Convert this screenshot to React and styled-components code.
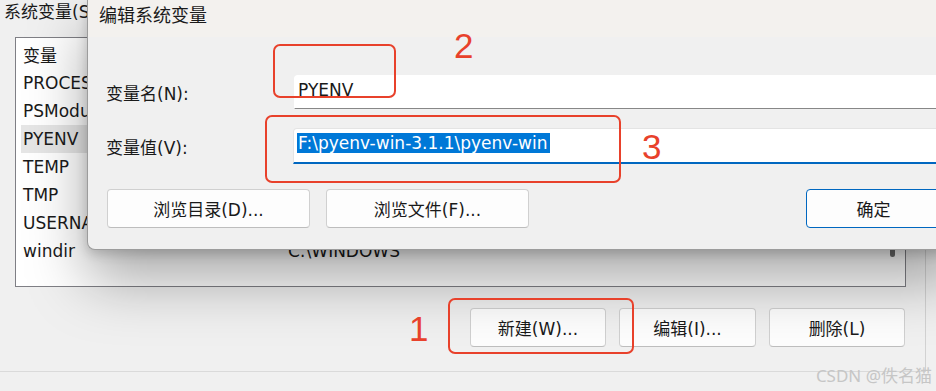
import styled, { createGlobalStyle } from 'styled-components'

const uiFont = `"DejaVu Sans", "Noto Sans CJK SC", sans-serif`

const GlobalStyle = createGlobalStyle`
  html, body {
    margin: 0;
    padding: 0;
    overflow: hidden;
    background: #f0f0f0;
  }
  body {
    font-family: ${uiFont};
    color: #1a1a1a;
  }
`

const Stage = styled.div`
  position: relative;
  width: 936px;
  height: 391px;
  overflow: hidden;
  background: #f0f0f0;
`

const BackWindow = styled.div`
  width: 926px;
  height: 372px;
  box-sizing: border-box;
  border-right: 1px solid #d2d2d2;
  border-bottom: 1px solid #dadada;
  display: flex;
  flex-direction: column;
`

const GroupTitle = styled.div`
  height: 37px;
  padding-left: 4px;
  font-size: 17px;
  line-height: 25px;
`

const ListBox = styled.div`
  margin-left: 15px;
  width: 891px;
  height: 250px;
  box-sizing: border-box;
  border: 1px solid #7f7f85;
  background: #fff;
  display: flex;
`

const Rows = styled.div`
  flex: 1;
  padding: 2px 0 0 5px;
`

const Row = styled.div`
  display: grid;
  grid-template-columns: 265px 1fr;
  align-items: center;
  height: ${p => (p.$header ? 29 : 28)}px;
  padding-left: 2px;
  font-size: 17px;
  white-space: nowrap;
  background: ${p => (p.$selected ? '#e6e6e6' : 'transparent')};
`

const ScrollTrack = styled.div`
  width: 25px;
  display: flex;
  justify-content: center;
`

const ScrollThumb = styled.div`
  margin-top: 2px;
  width: 5px;
  height: 217px;
  border-radius: 3px;
  background: #6b6b6b;
`

const ActionRow = styled.div`
  margin-top: 21px;
  padding-right: 20px;
  display: flex;
  justify-content: flex-end;
  gap: 13px;
`

const Button = styled.button`
  width: ${p => p.$w}px;
  height: 39px;
  box-sizing: border-box;
  border: 1px solid ${p => (p.$primary ? '#0067c0' : '#d0d0d0')};
  border-bottom-color: ${p => (p.$primary ? '#0067c0' : '#bdbdbd')};
  border-radius: 4px;
  background: #fdfdfd;
  font-family: ${uiFont};
  font-size: 17px;
  color: #1a1a1a;
  padding: 0;
  flex: none;
`

const Dialog = styled.div`
  position: absolute;
  left: 87px;
  top: 0;
  width: 874px;
  height: 250px;
  box-sizing: border-box;
  border-left: 1px solid #9c9c9c;
  border-bottom: 1px solid #9c9c9c;
  border-radius: 0 0 8px 8px;
  background: #f0f0f0;
  box-shadow: 0 30px 60px rgba(0, 0, 0, 0.34), 0 4px 12px rgba(0, 0, 0, 0.18);
  display: flex;
  flex-direction: column;
  overflow: hidden;
`

const TitleBar = styled.div`
  height: 37px;
  box-sizing: border-box;
  padding: 3px 0 0 11px;
  background: #f3f1ee;
  font-size: 18px;
  line-height: 25px;
`

const DialogBody = styled.div`
  padding: 0 20px 0 18px;
  display: flex;
  flex-direction: column;
`

const Field = styled.div`
  display: grid;
  grid-template-columns: 188px 1fr;
  align-items: center;
  margin-top: ${p => p.$gap}px;
`

const Label = styled.div`
  font-size: 17px;
`

const TextBox = styled.div`
  height: ${p => (p.$focused ? 36 : 34)}px;
  box-sizing: border-box;
  padding: 3px 3px 0;
  background: #fff;
  border-radius: 4px 4px 0 0;
  border: 1px solid ${p => (p.$focused ? '#e4e4e4' : '#fff')};
  border-bottom: ${p => (p.$focused ? '2px solid #0067c0' : '1px solid #878787')};
  margin-left: ${p => (p.$focused ? -1 : 0)}px;
  font-size: 17px;
  line-height: 23px;
  white-space: nowrap;
`

const Selected = styled.span`
  background: #0078d7;
  color: #fff;
  padding: 0 3px 0 1px;
`

const DialogButtons = styled.div`
  margin-top: 25px;
  padding-left: 1px;
  display: flex;
  gap: 16px;
`

const Spacer = styled.div`
  flex: 1;
`

const Mark = styled.div`
  position: absolute;
  left: ${p => p.$x}px;
  top: ${p => p.$y}px;
  width: ${p => p.$w}px;
  height: ${p => p.$h}px;
  box-sizing: border-box;
  border: 2px solid #e8412b;
  border-radius: 7px;
`

const MarkNumber = styled.div`
  position: absolute;
  left: ${p => p.$x}px;
  top: ${p => p.$y}px;
  font-family: "Liberation Sans", sans-serif;
  font-size: 35px;
  line-height: 36px;
  color: #e8412b;
`

const Watermark = styled.div`
  position: absolute;
  right: 4px;
  bottom: 4px;
  font-family: "Noto Sans", "Noto Sans CJK SC", sans-serif;
  font-size: 17px;
  color: #c6c6c6;
`

const variables = [
  { name: 'PROCESSOR_REVISION', value: '' },
  { name: 'PSModulePath', value: '' },
  { name: 'PYENV', value: '', selected: true },
  { name: 'TEMP', value: '' },
  { name: 'TMP', value: '' },
  { name: 'USERNAME', value: '' },
  { name: 'windir', value: 'C:\\WINDOWS' },
]

export default function App() {
  return (
    <Stage>
      <GlobalStyle />
      <BackWindow>
        <GroupTitle>系统变量(S)</GroupTitle>
        <ListBox>
          <Rows>
            <Row $header>
              <span>变量</span>
              <span>值</span>
            </Row>
            {variables.map(v => (
              <Row key={v.name} $selected={v.selected}>
                <span>{v.name}</span>
                <span>{v.value}</span>
              </Row>
            ))}
          </Rows>
          <ScrollTrack>
            <ScrollThumb />
          </ScrollTrack>
        </ListBox>
        <ActionRow>
          <Button $w={136}>新建(W)...</Button>
          <Button $w={137}>编辑(I)...</Button>
          <Button $w={136}>删除(L)</Button>
        </ActionRow>
      </BackWindow>

      <Dialog>
        <TitleBar>编辑系统变量</TitleBar>
        <DialogBody>
          <Field $gap={38}>
            <Label>变量名(N):</Label>
            <TextBox>PYENV</TextBox>
          </Field>
          <Field $gap={19}>
            <Label>变量值(V):</Label>
            <TextBox $focused>
              <Selected>F:\pyenv-win-3.1.1\pyenv-win</Selected>
            </TextBox>
          </Field>
          <DialogButtons>
            <Button $w={203}>浏览目录(D)...</Button>
            <Button $w={203}>浏览文件(F)...</Button>
            <Spacer />
            <Button $w={135} $primary>确定</Button>
          </DialogButtons>
        </DialogBody>
      </Dialog>

      <Mark $x={273} $y={44} $w={123} $h={54} />
      <MarkNumber $x={454} $y={28}>2</MarkNumber>
      <Mark $x={265} $y={115} $w={356} $h={68} />
      <MarkNumber $x={642} $y={129}>3</MarkNumber>
      <Mark $x={448} $y={298} $w={186} $h={56} />
      <MarkNumber $x={409} $y={311}>1</MarkNumber>

      <Watermark>CSDN @佚名猫</Watermark>
    </Stage>
  )
}
